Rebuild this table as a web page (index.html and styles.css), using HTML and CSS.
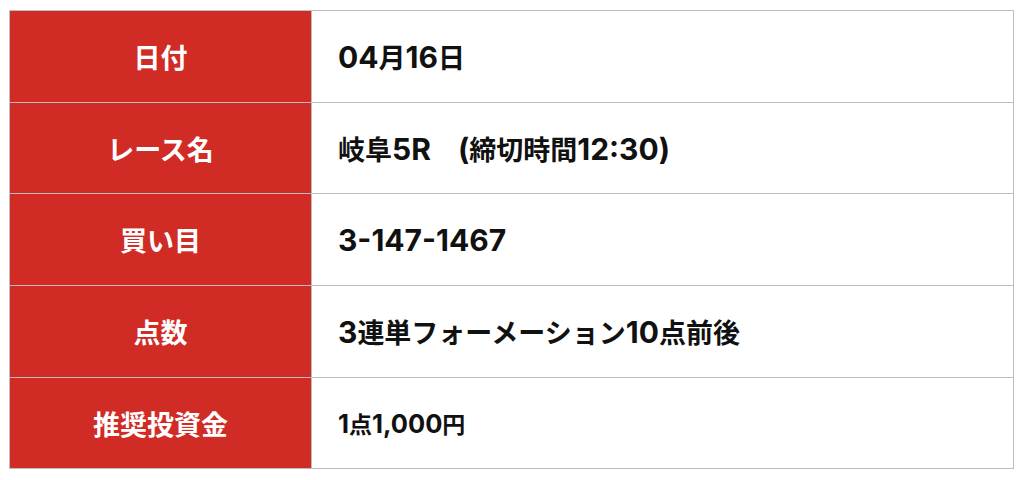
FILE: index.html
```html
<!DOCTYPE html>
<html lang="ja">
<head>
<meta charset="utf-8">
<link rel="stylesheet" href="styles.css">
</head>
<body>
<table class="info">
  <tr><th>日付</th><td><span class="lat">04</span>月<span class="lat">16</span>日</td></tr>
  <tr><th>レース名</th><td>岐阜<span class="lat">5R</span>　<span class="lat">(</span>締切時間<span class="lat">12:30)</span></td></tr>
  <tr><th>買い目</th><td><span class="lat">3-147-1467</span></td></tr>
  <tr><th>点数</th><td><span class="lat">3</span>連単フォーメーション<span class="lat">10</span>点前後</td></tr>
  <tr><th>推奨投資金</th><td class="small"><span class="lat">1</span>点<span class="lat">1,000</span>円</td></tr>
</table>
</body>
</html>
```
FILE: styles.css
```css
html, body { margin: 0; padding: 0; background: #fff; }
body { padding: 10px 10px 0 9px; font-family: "Noto Sans CJK JP", sans-serif; }
.info { width: 1005px; border-collapse: collapse; table-layout: fixed; }
.info tr { height: 91.7px; }
.info th, .info td { border: 1.5px solid #bdbdbd; padding: 0; }
.info th { width: 301px; background: #d12b26; color: #fff; font-size: 27px; font-weight: 700; text-align: center; }
.info td { text-align: left; padding-left: 26px; color: #111; font-size: 27px; font-weight: 700; white-space: nowrap; }
.info td .lat { font-family: "Inter", "Liberation Sans", sans-serif; font-size: 30px; font-weight: 700; }
.info td.small { font-size: 23px; }
.info td.small .lat { font-size: 25.5px; }
```
